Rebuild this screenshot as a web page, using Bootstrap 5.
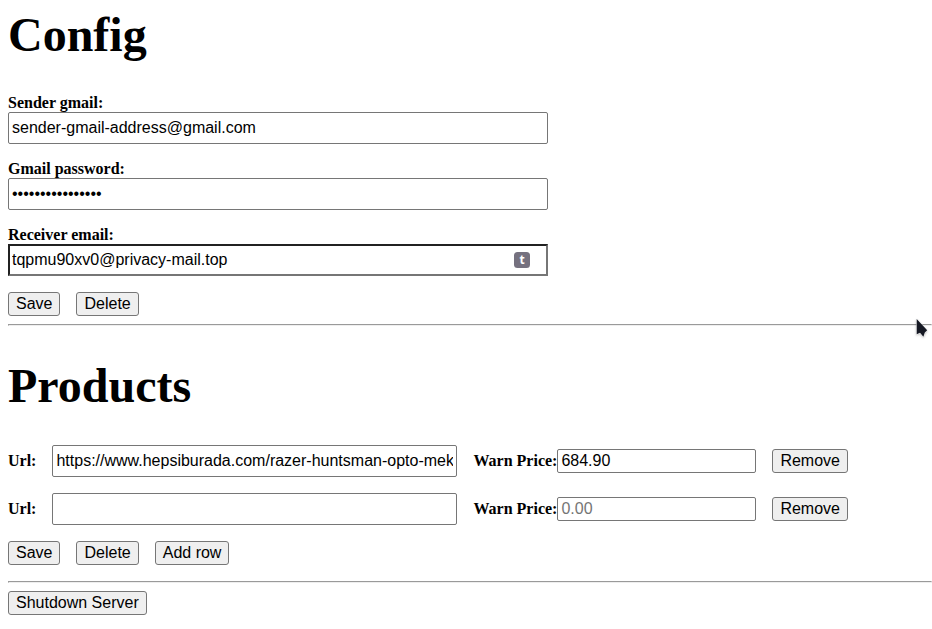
<!DOCTYPE html>
<html lang="en">
<head>
<meta charset="utf-8">
<title>Config</title>
<link href="https://cdn.jsdelivr.net/npm/bootstrap@5.3.0/dist/css/bootstrap.min.css" rel="stylesheet">
<style>
body{font:16px/18px "Liberation Serif",serif;color:#000;padding:7px 0 0 8px;overflow:hidden}
h1{font-size:48px;line-height:55px;font-weight:700;margin-bottom:32px}
.field{display:block;border:1px solid #767676;border-radius:2px;background:#fff;color:#000;font:16px/18px "Liberation Sans",sans-serif;padding:1px 3px;outline:0}
.field::placeholder{color:#757575;opacity:1}
.tall{height:32px}
.short{height:24px;width:199px}
.wide{width:540px}
.url{width:405px}
.sunk{border:2px inset #767676;border-radius:0;padding:1px 2px}
.push{border:1px solid #767676;border-radius:3px;background:#efefef;color:#000;font:16px/18px "Liberation Sans",sans-serif;padding:2px 7px;height:24px}
.rule{height:2px;border:1px solid;border-color:#9a9a9a #eee #eee #9a9a9a;opacity:1;margin:0}
.fill-icon{right:18px;top:8px}
.fill-icon text{font:bold 12px "Open Sans",sans-serif;fill:#fff}
.pointer{left:912px;top:316px;filter:drop-shadow(0 1px 1px rgba(0,0,0,.25))}
.second{margin-top:32px}
</style>
<script src="https://cdn.jsdelivr.net/npm/bootstrap@5.3.0/dist/js/bootstrap.bundle.min.js"></script>
</head>
<body>
<h1>Config</h1>
<form class="d-grid gap-3 mb-2 fw-bold">
<label>Sender gmail:<input class="field tall wide" value="sender-gmail-address@gmail.com"></label>
<label>Gmail password:<input type="password" class="field tall wide" value="abcdefghijklmnop"></label>
<label>Receiver email:
<span class="d-block position-relative wide"><input class="field tall wide sunk" value="tqpmu90xv0@privacy-mail.top">
<svg class="fill-icon position-absolute" width="16" height="16" viewBox="0 0 16 16"><rect width="16" height="16" rx="3.5" fill="#75717f"/><text x="8" y="12" text-anchor="middle">t</text></svg></span></label>
<div class="d-flex gap-3"><button type="button" class="push">Save</button><button type="button" class="push">Delete</button></div>
</form>
<hr class="rule">
<h1 class="second">Products</h1>
<form class="d-grid gap-3 mb-3">
<div class="d-flex gap-3 align-items-center fw-bold">
<label class="d-flex gap-3 align-items-center">Url:<input class="field tall url" value="https://www.hepsiburada.com/razer-huntsman-opto-mekanik-klavye"></label>
<label class="d-flex align-items-center">Warn Price:<input class="field short" value="684.90"></label>
<button type="button" class="push">Remove</button>
</div>
<div class="d-flex gap-3 align-items-center fw-bold">
<label class="d-flex gap-3 align-items-center">Url:<input class="field tall url"></label>
<label class="d-flex align-items-center">Warn Price:<input class="field short" placeholder="0.00"></label>
<button type="button" class="push">Remove</button>
</div>
<div class="d-flex gap-3"><button type="button" class="push">Save</button><button type="button" class="push">Delete</button><button type="button" class="push">Add row</button></div>
</form>
<hr class="rule mb-2">
<button type="button" class="push">Shutdown Server</button>
<svg class="pointer position-absolute" width="20" height="26" viewBox="0 0 20 26"><path d="M4.7 3v15.2l3.3-1.4 3.4 4 1.4-4.4 2.4-2.2z" fill="#151823" stroke="#fff" stroke-opacity=".7" stroke-width="1" paint-order="stroke"/></svg>
</body>
</html>
